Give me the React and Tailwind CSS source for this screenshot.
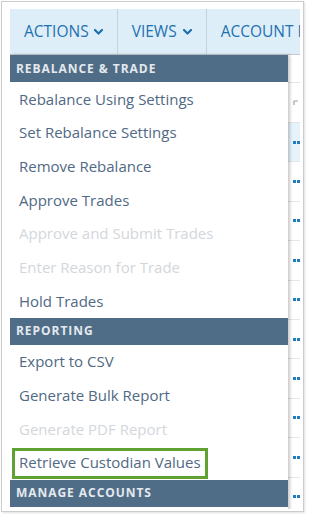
import React from "react";

const font = { fontFamily: '"Open Sans", "Liberation Sans", sans-serif' };

function Chevron() {
  return (
    <svg width="9" height="6" viewBox="0 0 9 6" className="block">
      <polyline points="1,1 4.5,4.5 8,1" fill="none" stroke="#1c6fae" strokeWidth="2.2" strokeLinecap="round" strokeLinejoin="round" />
    </svg>
  );
}

function Header({ children }) {
  return (
    <div className="h-[27px] bg-[#506d88] flex items-center pl-[6px] text-[12px] font-bold tracking-[0.95px] text-[#e4e9ee]">
      {children}
    </div>
  );
}

function Item({ children, disabled, highlight }) {
  return (
    <div className={`relative h-[33.7px] flex items-center pl-[9px] text-[15px] ${disabled ? "text-[#d3d7db]" : "text-[#506984]"}`}>
      {children}
      {highlight && (
        <div className="absolute left-[2px] top-[2px] w-[196px] h-[31px] border-[3px] border-[#5fa231]" />
      )}
    </div>
  );
}

function Dots() {
  return (
    <div className="flex gap-[1.5px] pr-0">
      <div className="w-[3px] h-[3px] bg-[#1f7cc0]" />
      <div className="w-[3px] h-[3px] bg-[#1f7cc0]" />
    </div>
  );
}

export default function App() {
  const rows = Array.from({ length: 10 });
  return (
    <div className="w-[313px] h-[523px] bg-white pt-[1px] pl-[1px]" style={font}>
      <div className="w-[303px] h-[511px] border border-[#cccccc] shadow-[1px_1px_2px_rgba(0,0,0,0.12)] pl-[8px] pt-[7px] bg-white">
        <div className="relative w-[290px] h-[500px] overflow-hidden">
          {/* Nav bar */}
          <div className="h-[46px] bg-[#ddeef9] border-b border-[#c3c9ce] flex items-stretch text-[15.5px] text-[#1d71b0] whitespace-nowrap">
            <div className="flex items-center gap-[5px] pl-[14px] pr-[14px] border-r border-[#c6d1d8]">
              <span>ACTIONS</span>
              <Chevron />
            </div>
            <div className="flex items-center gap-[6px] pl-[14px] pr-[14px] border-r border-[#c6d1d8]">
              <span>VIEWS</span>
              <Chevron />
            </div>
            <div className="flex items-center pl-[14px]">
              <span>ACCOUNT REPORTS</span>
            </div>
          </div>

          {/* Table behind */}
          <div>
            <div className="h-[28px] border-b border-[#e4e4e4]" />
            <div className="h-[40px] border-b border-[#e4e4e4] flex items-center justify-end pr-[1px]">
              <svg width="6" height="6" viewBox="0 0 6 6">
                <polyline points="1,1 1,5 5,5" fill="none" stroke="#9aa3aa" strokeWidth="1.2" transform="rotate(90 3 3)" />
              </svg>
            </div>
            {rows.map((_, i) => (
              <div
                key={i}
                className={`h-[39.4px] border-b border-[#e6e6e6] flex items-center justify-end ${i === 0 ? "bg-[#e7f3fb]" : ""}`}
              >
                <Dots />
              </div>
            ))}
          </div>

          {/* Dropdown menu */}
          <div className="absolute left-0 top-[46px] w-[278px] bg-white shadow-[2px_0_3px_rgba(0,0,0,0.22)]">
            <Header>REBALANCE &amp; TRADE</Header>
            <Item>Rebalance Using Settings</Item>
            <Item>Set Rebalance Settings</Item>
            <Item>Remove Rebalance</Item>
            <Item>Approve Trades</Item>
            <Item disabled>Approve and Submit Trades</Item>
            <Item disabled>Enter Reason for Trade</Item>
            <Item>Hold Trades</Item>
            <Header>REPORTING</Header>
            <Item>Export to CSV</Item>
            <Item>Generate Bulk Report</Item>
            <Item disabled>Generate PDF Report</Item>
            <Item highlight>Retrieve Custodian Values</Item>
            <Header>MANAGE ACCOUNTS</Header>
            <div className="h-[30px]" />
          </div>
        </div>
      </div>
    </div>
  );
}
